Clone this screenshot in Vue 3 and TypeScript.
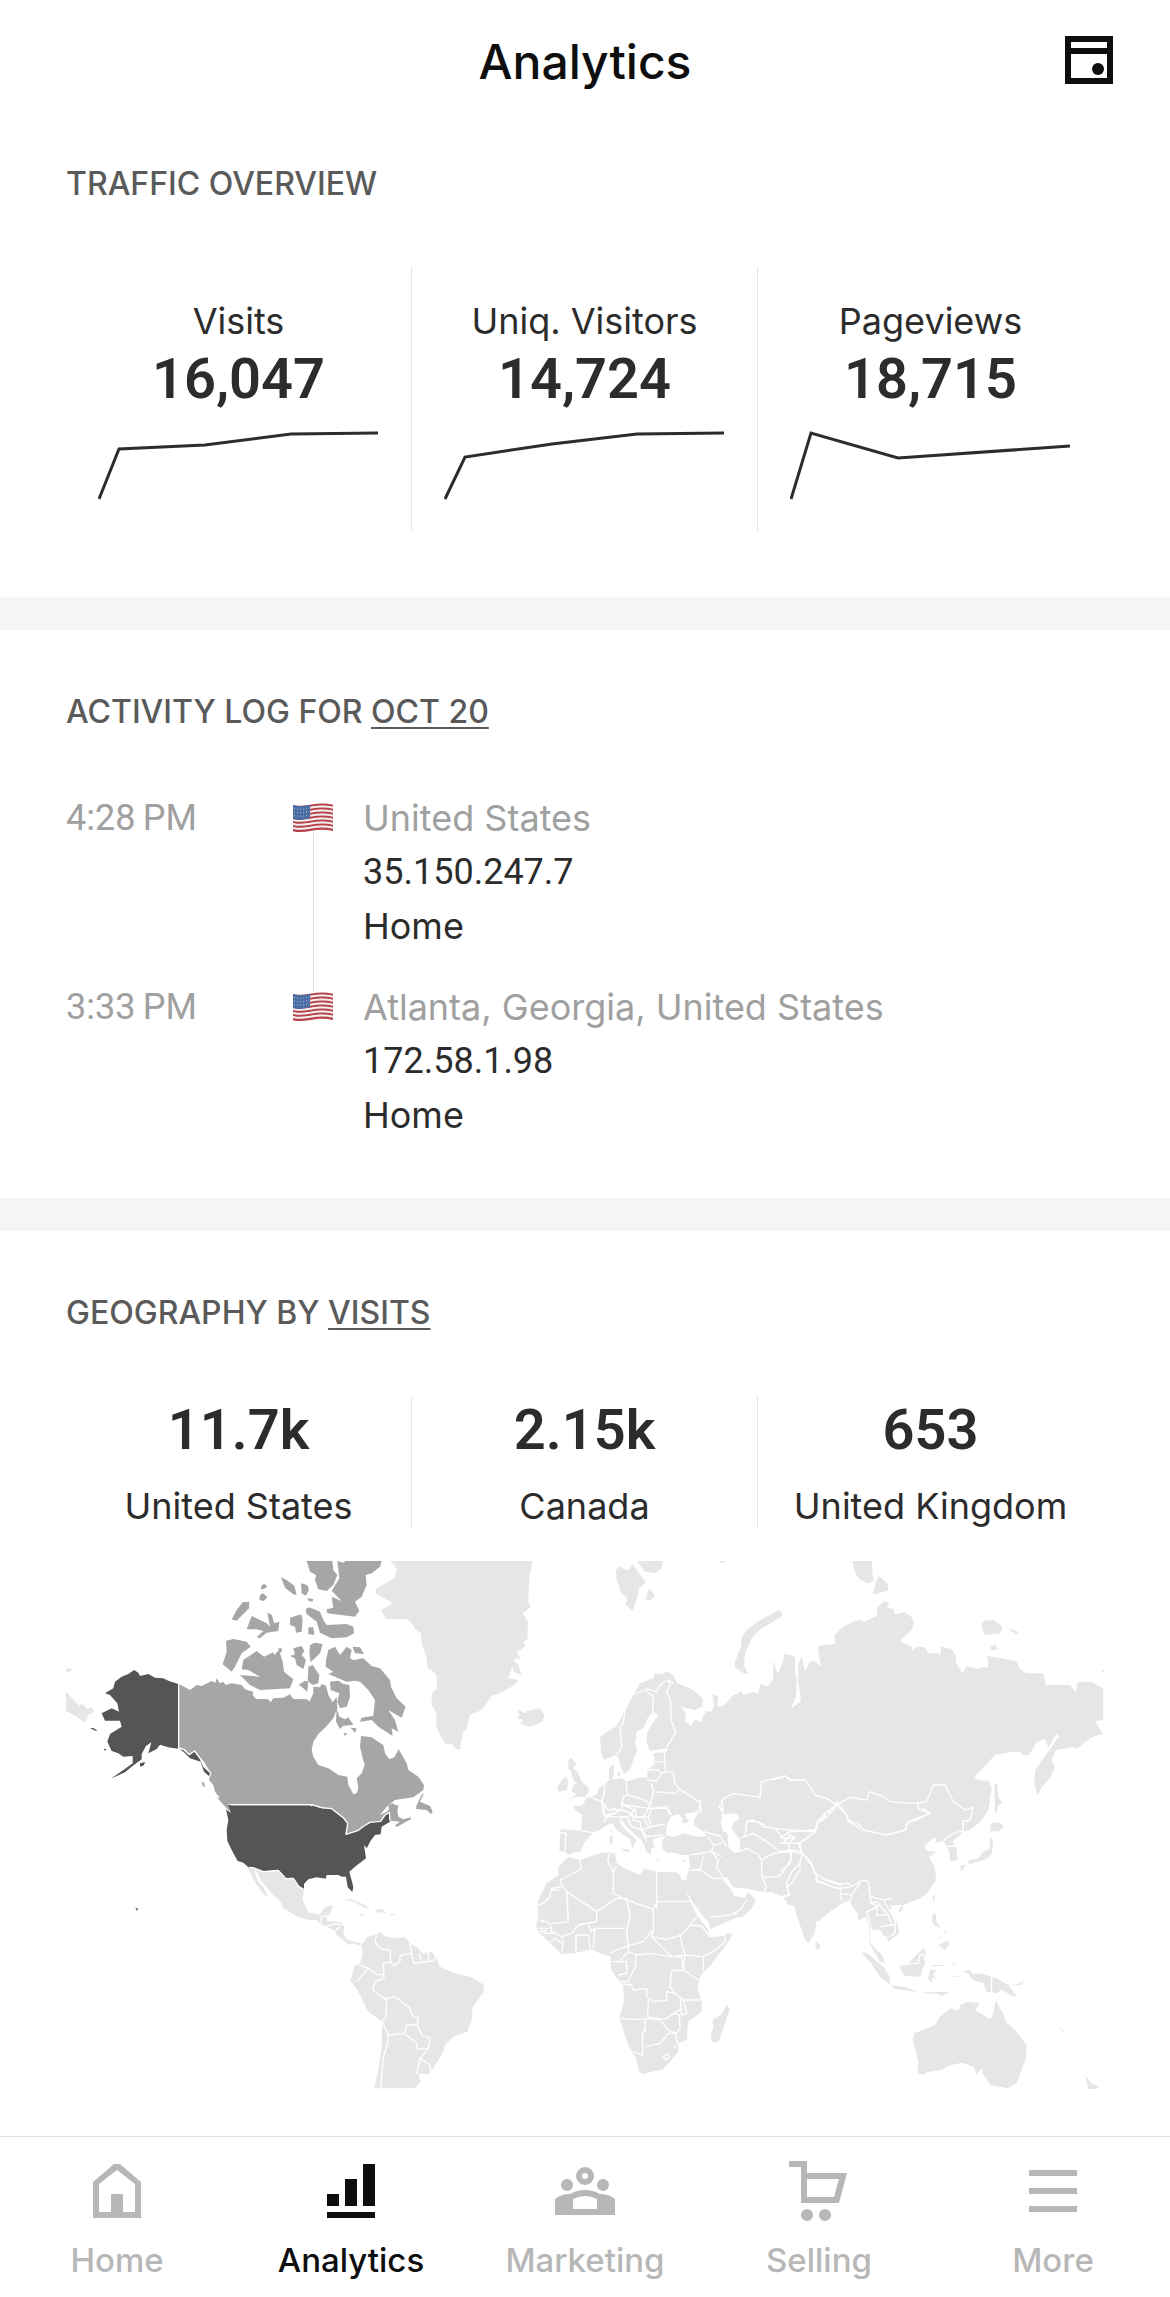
<script setup lang="ts">
interface Stat {
  label: string
  value: string
  points: string
}

interface Visit {
  time: string
  place: string
  ip: string
  page: string
}

interface CountryStat {
  name: string
  value: string
}

interface Tab {
  name: string
  icon: string
  active?: boolean
}

/* One tile of the world map: its origin and what is drawn in it. */
interface MapTile {
  id: string
  x: number
  y: number
  land: string
  mid?: string
  dark?: string
  water?: string
  borders?: string
}

const stats: Stat[] = [
  { label: 'Visits', value: '16,047', points: '1,69 21,19 107,15 193,4 280,3' },
  { label: 'Uniq. Visitors', value: '14,724', points: '1,69 21,27 108,14 193,4 280,3' },
  { label: 'Pageviews', value: '18,715', points: '1,69 21,3 108,28 280,16' },
]

const visits: Visit[] = [
  { time: '4:28\u2009PM', place: 'United States', ip: '35.150.247.7', page: 'Home' },
  { time: '3:33\u2009PM', place: 'Atlanta, Georgia, United States', ip: '172.58.1.98', page: 'Home' },
]

const countries: CountryStat[] = [
  { name: 'United States', value: '11.7k' },
  { name: 'Canada', value: '2.15k' },
  { name: 'United Kingdom', value: '653' },
]

const tabs: Tab[] = [
  {
    name: 'Home',
    icon: 'M5 22L26 4H32L53 22V58H5ZM11 24V52H23V34H35V52H47V24L29 10Z',
  },
  {
    name: 'Analytics',
    icon: 'M5 34H17V46H5ZM23 19H35V46H23ZM41 4H53V46H41ZM5 52H53V58H5Z',
    active: true,
  },
  {
    name: 'Marketing',
    icon:
      'M29 7a9 9 0 1 1 0 18a9 9 0 1 1 0-18ZM29 13a3 3 0 1 0 0 6a3 3 0 1 0 0-6Z' +
      'M11 19a6 6 0 1 1 0 12a6 6 0 1 1 0-12ZM47 19a6 6 0 1 1 0 12a6 6 0 1 1 0-12Z' +
      'M-1 39Q5 34 14 34Q21 30 29 30Q37 30 44 34Q53 34 59 39V55H-1ZM17 39V49H41V39Q35 36 29 36Q23 36 17 39Z',
  },
  {
    name: 'Selling',
    icon:
      'M-1 1H17V13H57L49 43H11V7H-1ZM17 19V37H44L49 19Z' +
      'M17 49a6 6 0 1 1 0 12a6 6 0 1 1 0-12ZM35 49a6 6 0 1 1 0 12a6 6 0 1 1 0-12Z',
  },
  { name: 'More', icon: 'M5 10H53V16H5ZM5 28H53V34H5ZM5 46H53V52H5Z' },
]

const flagStripes = Array.from({ length: 13 }, (_, i) => ({
  y: 3 + i * 2,
  color: i % 2 === 0 ? '#b8404a' : '#f3eeee',
}))

const tiles: MapTile[] = [
  {
    id: 'north-america',
    x: -18,
    y: -33,
    land:
      'M990 33H1200V597L1190 597L1175 582L1155 580L1138 550L1128 520L1130 490L1115 465L1115 430L1130 415L1135 385L1115 360L1103 355L1100 325L1085 280L1083 250L1068 240L1050 213L1040 207L980 208L962 180L1000 160L945 130L950 115L1005 85L1010 55Z' +
      'M18 425L58 467L65 460L82 478L95 472L103 485L85 495L75 518L50 500L18 483ZM18 357L30 355L36 361L18 368Z',
    mid:
      /* mainland */
      'M357 402L390 420L410 405L425 408L455 393L466 398L470 385L480 400L490 395L497 405L515 400L545 405L555 418L580 425L578 435L588 447L625 448L632 457L640 445L670 443L690 433L700 447L742 448L748 455L760 430L760 410L780 412L785 402L798 407L805 435L818 457L830 440L832 475L820 505L798 530L775 552L760 575L755 600L760 620L775 645L805 655L835 675L862 680L865 705L880 733L890 730L895 715L890 685L905 670L914 645L908 625L900 590L903 558L935 562L950 572L970 585L975 610L988 628L1003 622L1016 598L1040 640L1045 660L1075 680L1092 705L1090 720L1060 742L1005 750L980 770L960 795L980 785L995 768L1015 765L1012 785L1015 800L1030 808L1050 803L1052 808L1030 818L1012 830L1005 828L1020 815L993 812L960 820L925 822L893 840L862 855L858 845L863 822L850 805L815 778L785 775L757 765H512L480 745L465 725L460 705L447 690L452 668L432 635L405 605L390 615L375 598L357 593Z' +
      'M470 742L495 750L515 775L515 787L500 775ZM425 697L432 697L435 712L428 708Z' +
      'M1085 735L1092 730L1080 755L1110 768L1118 785L1113 792L1100 780L1068 777L1070 765Z' +
      /* arctic islands */
      'M740 33H817L820 60L832 75L820 105L800 123L775 118L765 90L768 75L750 65Z' +
      'M832 33L850 38L857 33H965L960 50L935 70L917 75L920 105L905 140L885 155L898 182L885 200L802 190L800 178L820 173L815 140L845 153L815 122L838 85Z' +
      'M737 178L748 172L780 185L790 210L800 225L860 222L880 230L882 250L860 262L815 265L780 248L770 215L740 192Z' +
      'M663 82L680 90L703 107L710 135L700 133L675 113ZM723 100L742 105L747 120L737 137L725 130ZM742 145L760 147L757 155L745 152Z' +
      'M605 105L615 102L622 110L610 118L603 116ZM600 135L610 130L622 142L612 153L598 150Z' +
      'M548 157L568 155L567 175L530 212L515 208L530 180ZM560 238L575 198L620 220L630 230L622 187L635 195L643 220L658 215L655 243L620 248L600 265L590 262L610 243L590 238Z' +
      'M690 203L723 193L728 208L725 245L708 248L705 230L690 225ZM745 232L760 232L763 255L745 252Z' +
      'M498 272L520 267L560 275L572 290L545 310L525 350L515 365L488 343L500 305Z' +
      'M590 303L612 320L640 307L643 315L657 300L668 335L672 365L700 388L690 415L600 420L570 405L540 375L600 380L565 360L545 358L550 330ZM655 295L665 295L665 308L657 305Z' +
      'M700 295L725 288L733 303L725 315L738 330L730 357L710 345L705 325L690 318L705 313ZM750 285L765 278L788 282L780 310L752 337L748 310Z' +
      'M745 350L758 345L778 375L775 400L757 405L743 392ZM715 405L735 392L745 395L742 425L722 408Z' +
      'M805 300L825 290L840 315L860 290L875 300L870 325L880 330L910 325L935 348L960 355L990 390L993 410L1010 445L1037 470L1025 503L985 480L1005 510L1015 545L995 535L998 558L955 530L935 510L900 515L905 503L940 497L945 450L925 420L900 395L885 392L860 395L805 372L820 365L797 350L798 330ZM878 290L900 292L912 312L885 310Z' +
      'M810 395L835 392L850 402L868 405L870 440L860 470L840 475L832 455L838 430L812 420ZM830 475L838 500L855 508L865 502L880 525L850 527L840 537L828 515ZM872 533L890 535L885 548ZM850 550L862 549L855 558Z',
    dark:
      'M222 360L235 368L240 378L265 372L285 383L310 385L325 392L355 402V596L325 592L300 584L290 597L265 610L274 577L258 588L245 612L245 628L215 650L195 667L152 686L190 660L218 640L218 618L190 620L175 610L155 603L142 575L150 552L185 530L180 512L135 512L125 490L155 475L177 485L172 460L150 435L135 430L160 415L165 395L185 380L205 372Z' +
      'M355 594L372 599L388 614L404 603L420 625L432 650L452 668L449 680L432 665L422 635L390 625L372 607Z' +
      'M240 640L256 636L250 647L240 650ZM90 535L100 534L112 542L108 543ZM130 597L140 597L135 602Z',
    water: 'M905 440L918 430L925 445L915 460L905 452Z',
    borders:
      'M356 402V594L372 599L388 614L404 603L420 625L432 650L452 668L449 680M512 764H750L757 768',
  },
  {
    id: 'americas',
    x: -18,
    y: 717,
    land:
      /* mexico and central america */
      'M563 200L610 215L640 215L655 211L678 236L700 235L715 260L732 268L728 300L745 338L780 343L795 320L820 315L812 335L803 350L800 362L845 367L852 380L850 402L862 420L885 425L905 430L900 438L880 430L868 435L830 405L825 392L800 380L780 372L770 360L745 360L715 352L670 325L662 305L640 285L605 245L590 215L582 210L595 245L610 260L625 295L605 275L590 255L572 222Z' +
      'M850 300L870 297L900 308L930 323L915 325L880 305ZM945 328L965 328L980 338L950 337ZM900 343H912L912 346H900ZM990 342H1005V345H990Z' +
      /* south america */
      'M905 435L920 412L945 405L960 395L975 408L1000 415L1035 412L1050 430L1075 445L1085 460L1115 455L1130 475L1140 500L1185 520L1230 530L1270 553L1272 575L1238 620L1235 660L1222 695L1180 710L1155 735L1150 755L1120 805L1105 823L1075 822L1082 845L1065 865H942L955 810L965 740L967 665L925 635L895 575L872 543L882 500L900 490L908 465Z',
    mid:
      'M1006 74L1030 60L1052 52L1053 57L1015 78ZM985 15L1000 10L1010 20L1012 40L1015 55L1003 60L993 60Z',
    dark:
      'M505 15H755L785 25L815 27L850 55L863 72L858 103L893 92L915 75L930 67L962 64L975 45L988 37L990 65L965 80L962 103L945 105L932 122L920 145L912 135L918 175L885 200L868 215L880 260L877 276L863 262L858 230L845 230L835 225L800 225L797 236L770 232L745 238L732 252L732 269L717 260L700 235L678 236L657 212L640 211L610 215L583 204L565 202L550 188L533 183L515 150L502 122L500 90L505 60L498 28L512 38Z' +
      'M226 325L234 325L231 333Z',
    borders:
      'M512 14H755L785 23L815 26L850 53L863 70L858 103L893 92L912 78L930 67L962 64L975 45L988 37L990 62' +
      'M567 202L583 204L610 215L655 211L678 236L700 235L717 260L732 269' +
      'M780 372L785 350L805 348M800 380L820 372L848 373M825 392L840 380' +
      'M950 405L945 425L960 445L990 450L992 485L970 490L972 535L945 545L938 570L965 590L980 600L978 650L967 665L985 705L1030 700M992 485L1000 497L1020 485L1020 467L1055 460L1050 430M1055 460L1062 490L1120 482L1132 468M1078 460L1085 487M1105 455V483' +
      'M890 492L925 505L950 523L972 525M925 505L890 545M970 598L1005 590L1050 625L1055 645L1075 655L1072 675L1040 675L1033 700L1070 730L1072 748L1105 745L1110 715L1085 705L1072 675M1105 745L1080 775L1110 795L1112 815M1080 775L1070 822M967 665L985 705L982 735L970 770L962 865',
  },
  {
    id: 'europe',
    x: 1122,
    y: -33,
    land:
      /* greenland east and islands */
      'M-10 33H278L268 80L265 155L272 172L248 190L264 215L262 268L250 275L257 290L230 305L242 328L225 325L205 385L237 390L215 410L180 430L155 438L125 480L90 495L78 540L68 550L60 597L45 595L38 582L15 580L-10 535ZM222 333L235 345L245 375L225 370L217 350Z' +
      'M230 478L255 490L262 482L300 475L313 495L308 515L270 530L240 522L250 510L230 503L240 495Z' +
      'M528 60L542 47L555 60L568 58L578 43L617 97L597 115L592 145L577 183L557 165L562 145L545 130L530 90ZM590 33H668L665 55L645 70L615 65ZM625 117L635 122L645 138L630 152L618 147ZM840 33H855L852 39H843Z' +
      'M1018 180L1028 190L1022 202L965 235L935 265L915 310L912 345L925 373L910 370L885 352L885 335L903 290L905 260L920 240L960 210Z' +
      /* british isles */
      'M385 630L395 623L402 635L410 640L400 655L415 668L425 695L445 712L447 725L435 740L405 742L388 748L410 732L395 725L400 705L412 700L400 690L393 665L385 655ZM365 690L378 680L385 690L380 720L355 725L352 712Z' +
      /* scandinavia, russia and central europe */
      'M480 560L530 528L560 470L600 400L640 385L645 370L670 372L680 363L700 375L712 400L760 420L788 445L788 468L765 480L722 470L737 490L736 515L755 528L762 508L785 518L788 497L800 483L815 485L822 465L817 432L835 440L832 468L850 468L880 435L905 425L910 436L940 425L955 432L960 402L990 412L1030 437L1033 420L1015 375L1035 312L1065 320V400L1055 475L1080 455L1090 440V782H425L398 772L405 767L422 768L442 755L455 740L472 732L475 715L495 702L508 690L507 655L522 643L522 670L515 688L545 685L560 695L600 683L622 683L622 660L645 643L640 610L680 605L685 595L630 603L620 580L622 545L655 495L640 485L625 500L610 535L590 545L585 580L592 600L578 635L570 660L552 672L540 645L535 620L525 615L492 630L483 610ZM533 668L542 668L540 677L533 677Z',
    borders:
      'M530 615L545 590L540 530L550 520L555 480L575 435L615 420L640 440L638 485M615 415L650 425L665 400L685 390L690 405L680 425L692 455L693 510L707 548L680 592M685 390L700 400' +
      'M645 635L675 637L673 605M622 660L655 660L665 670L650 693L620 690M675 637L677 665L665 670M677 665L700 668L705 700L720 718L705 730L640 725L635 700M720 718L780 757L778 780L740 800M495 700L492 735L485 755L505 780L545 778L550 740L562 735L558 695M562 735L600 745L632 760L640 725M632 760L625 775L590 770L550 765M625 775L680 775L695 795M450 740L485 755L490 790L500 800L545 780M545 780L575 790L590 770M575 790L580 805L610 800L625 775M610 800L625 830M500 800L560 800L575 830L605 840' +
      'M838 770L850 745L880 730L960 742L965 695L1035 678L1050 690L1080 690M838 770L850 790L845 800M918 840L920 815L940 810L975 825',
    water:
      'M735 790L775 790L760 810L740 808ZM848 795L885 790L895 800L870 820L875 845H850L842 820Z',
  },
  {
    id: 'africa',
    x: 1302,
    y: 717,
    land:
      /* southern europe and the near east */
      'M262 -8H1020V310L960 360L948 365L945 395L925 430L915 418L890 345L885 315L865 312L850 290L835 275L790 277L735 265L700 262L680 232L665 235L690 265L705 287L735 290L745 275L768 302L755 325L730 350L705 355L630 388L627 370L580 310L540 240L558 235L570 200L566 165L545 165L525 158L500 158L486 145L487 120L500 107L480 112L458 118L465 140L452 147L453 165L440 155L425 120L400 100L378 78L362 55L358 65L372 85L410 120L405 128L398 145L390 118L350 90L338 70L325 73L300 90L278 98L253 128L240 155L220 158L205 165L195 155L178 153L182 88L243 92L247 45L232 35L218 20L245 18Z' +
      'M362 148L388 147L385 158ZM330 108H338V130H330ZM332 85L337 90L335 103ZM458 178H475V182ZM545 182L558 178L552 187Z' +
      /* africa */
      'M205 172L240 180L300 160L328 157L345 160L350 190L370 203L420 225L435 205L470 215L530 217L540 225L560 280L590 345L625 390L630 412L695 398L693 415L640 485L600 530L592 565L605 605L605 635L565 665L560 720L535 730L535 755L490 808L425 822L415 810L410 780L385 735L358 655L372 605L370 560L333 510L332 470L300 460L275 447L225 460L185 462L150 430L115 395L108 375L115 350L112 305L140 250L175 225L175 200Z' +
      'M682 613L688 632L655 727L635 725L632 700L640 685L637 660L665 643ZM948 425L960 435L957 447H948Z',
    water:
      'M498 97L502 70L515 48L535 42L548 55L545 67L560 70L575 50L592 38L582 60L583 77L612 95L618 108L590 110L553 100L520 110L500 107Z' +
      'M663 62L690 42L713 43L717 58L700 68L695 85L720 120L721 155L702 158L685 140L683 105ZM458 118L480 112L487 120L486 145L500 158L470 162Z',
    borders:
      /* europe and asia */
      'M243 92L278 98M182 97L198 100L195 155M300 0L315 15L310 40L320 55L310 65M315 45L345 40L355 30L335 25M362 55L395 45L410 52L405 30L380 20L360 10M410 52L445 50L455 25L500 20L510 45M445 50L455 80L495 72M455 80L425 90L420 65L395 60M425 90L440 110L490 105M425 90L440 125M600 0L605 35L575 45M665 0L670 30L655 20M735 110L740 65L775 65L790 80L825 85L850 115L870 140L860 155L840 155L800 125L760 100L720 115M820 85L870 90L945 95L920 115L895 130L850 130L870 105L885 112L870 125M895 130L905 160L870 155L875 175L850 215L835 230L785 232M870 155L820 160L785 180L775 165L740 145L718 155M785 180V230L800 262L790 275M905 165L900 190L875 215L860 250L865 285L850 287M905 160L935 195L945 220L975 240L1020 255M950 228L952 242L1010 265M612 95L660 108L680 140M625 110L640 135L665 130M640 135L635 155L570 165M635 155L655 180L650 200L670 235L640 235L600 210L570 210M600 210L610 170M640 155L665 170M545 235L560 240M630 352L690 345L720 330L740 300M705 345L715 330M700 285L735 292' +
      'M945 95L955 60L975 55L1000 30L1010 5M1010 5L1020 10' +
      /* africa */
      'M240 180L243 207L182 240L185 260L155 265L150 290L130 310L112 315M328 160L323 185L340 215L340 280L380 300L460 328L460 390L445 405L430 425L385 437L380 400L390 345L380 295M340 215L350 200M380 295L350 295L290 335L200 275L182 250M200 275L205 365L155 370M152 270H180M150 370L120 360M290 335V365L235 375L215 400L185 410L155 395L150 370M265 375L275 395L285 385L375 385M285 385L280 445M228 405H265L270 445M228 405V458M185 410L190 430L185 455M118 385H145M118 393H140M145 430L165 415L185 430M130 400L165 400M470 215V325M470 305H575M460 328L470 305M460 390L455 410L500 418L545 405L570 375L590 350M570 375L605 378L630 410L675 405V425L640 455L610 470L555 465L545 430L540 400M455 410L500 455L515 470L555 465M555 465L550 510L595 540M610 470V515M515 470L545 470L550 510L515 512L510 560L525 580L500 575V600L460 605L440 590L440 565L400 570L395 555L365 552M385 437L350 450L330 460M335 485H380V520L355 525M385 437V455L410 465L405 500L385 545L360 545M385 455L360 482M410 465L450 460L515 470M525 580L550 600H600M550 600L560 640L545 645L540 590M445 600L443 650L470 660L500 655L545 625M360 655L400 658L480 655M435 658V695H428V765L400 755M435 740L480 730L505 700L525 700L535 735M480 660L505 690L530 700L540 685L538 645L520 640M490 770L500 762L510 770L498 780ZM525 735V745',
  },
  {
    id: 'russia',
    x: 2142,
    y: -33,
    land:
      'M-20 330L-5 380L15 437L-20 425ZM0 360L15 312L40 317L38 345L50 380L48 440L30 480L45 482L63 450L55 400L55 345L65 318L75 362L90 335L105 333L122 350L113 292L125 285L167 283L163 255L190 230L225 212L245 210L250 217L290 197L293 170L315 153L328 160L320 172L340 178L345 193L375 187L395 202L402 220L395 240L360 272L395 290L398 302L410 290L435 292L445 308L482 312L483 290L515 297L528 318V340L548 370L560 348L590 357L610 350L625 353L622 318L708 333L720 357L738 370H790L797 405L870 405L888 425L893 395L935 397L970 415V510L947 513L968 552L935 562L888 597L880 590L828 600L815 630L825 650L810 685L785 712L772 735L763 700L765 662L790 625L838 558L828 552L805 593L795 568L770 577L747 615L730 616L720 605L690 607L645 615L582 683L600 690L625 693L635 715L625 780L600 815L570 840L545 844H-60V440Z' +
      'M217 33H275L280 95L262 100L235 85L222 60ZM297 77L324 103V122L278 133L288 95ZM603 225L612 212L640 210L667 230L662 250L615 255ZM682 235L715 245L710 255ZM630 292L645 285L655 298L635 301ZM963 365L971 357V368ZM-8 180L8 190L-8 203ZM643 703H652L655 740L668 760L655 765L650 790L645 780Z',
    borders:
      'M-20 690L15 678L35 690H60L78 690L105 735L140 745L170 765L210 742L262 750L268 725L310 740L330 755L400 760L440 755L460 705L495 705L520 755L555 780L580 772L570 810L550 815V840M170 765L155 775L135 790L110 820L112 840M170 765L200 795L205 815L240 835M415 755L415 775L450 790L410 805L380 820L378 840',
  },
  {
    id: 'asia-pacific',
    x: 2142,
    y: 717,
    land:
      'M-20 -8H630L625 30L600 65L570 90L550 92L535 110L518 122L530 150L532 180L510 184L508 155L498 137L490 122L465 130L470 112L455 118L433 140L442 153L470 155L447 172L455 185L465 205L468 240L440 282L420 295L368 315L335 315L330 335L350 365L358 400L325 425L322 410L308 405L300 390L280 390L270 375L270 425L285 445L305 462L315 490L300 485L285 460L268 430V385L258 350L235 362L232 340L217 320L210 300L185 312L107 360L105 395L85 430L75 418L50 345L43 318L25 315L10 290L-20 280Z' +
      'M370 313L368 330L357 340V328ZM458 290L467 280L462 303H457ZM105 425L118 432L120 445L108 447Z' +
      'M635 65L650 70L655 65L672 80L655 95L635 92L628 103ZM632 110L640 125L635 160L625 175L595 185L560 190L570 180L595 175L610 155L628 145ZM540 197L555 195L545 215ZM565 190L580 188L568 196Z' +
      'M457 343L468 342L470 365L482 385L465 378L457 368ZM478 410L485 415H478ZM495 390L500 400L492 397ZM475 435L505 422L507 435L495 450Z' +
      'M243 457L262 460L310 500L330 530L328 553L300 530L270 485ZM330 555L380 562L410 575L345 567ZM430 577L510 575L485 588L470 580L440 581ZM360 492L385 490L415 460L430 445L440 460L430 470L435 490L420 530L375 527L362 510ZM450 508L470 512L458 522L475 545L458 530L455 548L445 538ZM455 495H492V498H455ZM518 488L525 490L522 500ZM520 527H540V530H520Z' +
      'M550 513L570 510L577 522L600 520L650 535L685 555L710 590L690 585L665 568L650 580L620 575L610 550L580 540L565 522ZM690 555L715 552L732 542L725 555Z' +
      'M647 600L660 625L670 640L680 668L700 685L740 735L738 775L710 850L683 865L632 855L608 820L605 805L590 825L582 800L545 788L505 797L485 810L440 817L430 825L413 820L415 785L398 718L403 700L465 675L480 650L512 625L535 633L540 615L565 605L600 610L585 630L632 658L640 640Z' +
      'M915 825L932 848L957 860L950 867H925ZM832 677L855 695L850 695ZM950 658L957 657L955 662Z',
    borders:
      'M0 115L30 95L100 90L110 100M170 5L160 30L135 40L130 60L110 70L105 95L60 130L65 155L95 190L105 220L140 240L180 252L205 250L215 260L250 240L265 245L270 290L310 300L335 295M0 130L45 130L60 130M10 115L45 112L30 125M0 155L35 150L65 155M35 155L30 190L0 215M60 185L60 210L35 250L20 260L30 285L10 290M107 230L110 245L175 265L210 262M180 252V262M180 265L185 305M185 280L215 285L212 300M215 285L240 250M270 290L275 310L295 320L260 335L270 375M270 310L290 305L325 345L335 375L300 380M290 320V345L320 345M310 300L325 325L345 360L345 400L330 410M335 375L345 375' +
      'M170 5L200 45L205 60L240 75L250 90L320 105L375 90L385 65L410 60L450 40L430 25M550 92V60M550 92L520 100L490 122M500 140L525 138M362 495L400 490L415 490L420 465L435 462M635 525V580',
  },
]
</script>

<template>
  <div class="app">
    <header class="top-bar">
      <h1 class="title">Analytics</h1>
      <button class="calendar" type="button" aria-label="Choose dates">
        <svg viewBox="0 0 48 48" width="48" height="48" aria-hidden="true">
          <path fill-rule="evenodd" d="M0 0H48V48H0ZM6 6V12H42V6ZM6 18V42H42V18Z" />
          <circle cx="33" cy="33" r="6" />
        </svg>
      </button>
    </header>

    <main>
      <section class="panel traffic">
        <h2 class="heading">TRAFFIC OVERVIEW</h2>
        <div class="columns">
          <div v-for="s in stats" :key="s.label" class="stat">
            <span class="label">{{ s.label }}</span>
            <strong class="value">{{ s.value }}</strong>
            <svg class="spark" viewBox="0 0 281 71" aria-hidden="true">
              <polyline :points="s.points" />
            </svg>
          </div>
        </div>
      </section>

      <section class="panel activity">
        <h2 class="heading">
          ACTIVITY LOG FOR <button type="button" class="picker">OCT 20</button>
        </h2>
        <ol class="log">
          <li v-for="v in visits" :key="v.time" class="entry">
            <time class="time">{{ v.time }}</time>
            <div class="rail">
              <svg class="flag" viewBox="0 0 40 30" role="img" aria-label="United States">
                <path
                  v-for="s in flagStripes"
                  :key="s.y"
                  :d="`M0 ${s.y}C14 ${s.y + 4} 22 ${s.y - 5} 40 ${s.y}`"
                  :stroke="s.color"
                  stroke-width="2.2"
                  fill="none"
                />
                <path d="M0 2C7 4 12 3 17 1.500V15C12 16.500 7 18 0 16Z" fill="#4a6da3" />
                <path
                  d="M1 5.500C7 7 12 6 16 4.500M1 9C7 10.500 12 9.500 16 8M1 12.500C7 14 12 13 16 11.500"
                  stroke="#a9bbd6"
                  stroke-width="1"
                  stroke-dasharray="1 2"
                  fill="none"
                />
              </svg>
            </div>
            <div class="details">
              <span class="place">{{ v.place }}</span>
              <span class="address">{{ v.ip }}</span>
              <span>{{ v.page }}</span>
            </div>
          </li>
        </ol>
      </section>

      <section class="panel geography">
        <h2 class="heading">
          GEOGRAPHY BY <button type="button" class="picker">VISITS</button>
        </h2>
        <div class="columns">
          <div v-for="c in countries" :key="c.name" class="country">
            <strong class="value">{{ c.value }}</strong>
            <span class="label">{{ c.name }}</span>
          </div>
        </div>
        <svg class="map" viewBox="0 0 3114 1584" role="img" aria-label="Visits by country">
          <g v-for="t in tiles" :key="t.id" :transform="`translate(${t.x} ${t.y})`">
            <path class="land" :d="t.land" />
            <path v-if="t.mid" class="mid" :d="t.mid" />
            <path v-if="t.dark" class="dark" :d="t.dark" />
          </g>
          <g v-for="t in tiles" :key="t.id" :transform="`translate(${t.x} ${t.y})`">
            <path v-if="t.water" class="water" :d="t.water" />
            <path class="border" :d="t.borders" />
          </g>
        </svg>
      </section>
    </main>

    <nav class="tabs" aria-label="Main">
      <a
        v-for="t in tabs"
        :key="t.name"
        href="#"
        class="tab"
        :class="{ active: t.active }"
        :aria-current="t.active ? 'page' : undefined"
      >
        <svg viewBox="0 0 58 62" width="58" height="62" aria-hidden="true">
          <path fill-rule="evenodd" :d="t.icon" />
        </svg>
        <span>{{ t.name }}</span>
      </a>
    </nav>
  </div>
</template>

<style>
body {
  margin: 0;
  background: #fff;
}
</style>

<style scoped>
.app {
  font-family: Inter, "Liberation Sans", sans-serif;
  font-size: 36px;
  color: #2c2c2c;
}

button {
  padding: 0;
  border: 0;
  background: none;
  font: inherit;
  color: inherit;
  cursor: pointer;
}

.top-bar {
  display: grid;
  grid-template-columns: 1fr auto 1fr;
  align-items: start;
  height: 88px;
  padding: 32px 57px 0;
  color: #0e0e0e;
}

.title {
  grid-column: 2;
  margin: 0;
  font-size: 48px;
  font-weight: 500;
  line-height: 60px;
}

.calendar {
  justify-self: end;
  height: 48px;
  margin-top: 4px;
}

.calendar svg {
  display: block;
  fill: #0e0e0e;
}

.panel {
  padding: 62px 66px 0;
  border-top: 33px solid #f5f5f5;
}

.traffic {
  padding-top: 44px;
  padding-bottom: 66px;
  border-top: 0;
}

.activity {
  padding-bottom: 56px;
}

.geography {
  padding-bottom: 47px;
}

.heading {
  margin: 0;
  font-size: 32px;
  font-weight: 500;
  line-height: 40px;
  color: #5a5a5a;
}

.picker {
  text-decoration: underline;
  text-decoration-thickness: 2px;
  text-underline-offset: 4px;
}

.columns {
  display: grid;
  grid-template-columns: repeat(3, 1fr);
  margin-top: 63px;
}

.stat,
.country {
  display: flex;
  flex-direction: column;
  align-items: center;
  border-right: 1px solid #e6e6e6;
}

.stat:last-child,
.country:last-child {
  border-right-color: transparent;
}

.stat {
  padding: 30px 32px;
}

.country {
  gap: 16px;
}

.label {
  line-height: 48px;
  white-space: nowrap;
}

.country .label {
  margin: 2px 0 -2px;
}

.value {
  font-family: Roboto, "Liberation Sans", sans-serif;
  font-size: 56px;
  font-weight: 600;
  line-height: 68px;
}

.spark {
  display: block;
  width: 100%;
  margin-top: 17px;
}

.spark polyline {
  fill: none;
  stroke: #2c2c2c;
  stroke-width: 3;
}

.log {
  margin: 59px 0 0;
  padding: 0;
  list-style: none;
}

.entry {
  display: grid;
  grid-template-columns: 227px 70px 1fr;
  line-height: 54px;
}

.time,
.place {
  color: #a0a0a0;
}

.time,
.address {
  font-family: Roboto, "Liberation Sans", sans-serif;
}

.rail {
  display: flex;
  flex-direction: column;
  width: 40px;
}

.flag {
  flex: none;
  display: block;
  width: 40px;
  height: 30px;
  margin-top: 12px;
}

.entry:not(:last-child) .rail::after {
  content: "";
  flex: 1;
  width: 1px;
  margin: 0 auto -12px;
  background: #e0e0e0;
}

.details {
  display: flex;
  flex-direction: column;
}

.entry:not(:last-child) .details {
  padding-bottom: 27px;
}

.map {
  display: block;
  width: 100%;
  margin-top: 33px;
}

.land {
  fill: #e6e6e6;
}

.mid {
  fill: #a6a6a6;
}

.dark {
  fill: #555;
}

.water {
  fill: #fff;
}

.border {
  fill: none;
  stroke: #fff;
  stroke-width: 4;
  stroke-linejoin: round;
}

.tabs {
  display: grid;
  grid-template-columns: repeat(5, 1fr);
  padding: 23px 0 17px;
  border-top: 1px solid #dedede;
}

.tab {
  display: flex;
  flex-direction: column;
  align-items: center;
  gap: 18px;
  font-size: 33px;
  font-weight: 500;
  line-height: 40px;
  color: #b7b7b7;
  text-decoration: none;
}

.tab svg {
  display: block;
  overflow: visible;
  fill: currentColor;
}

.tab.active {
  color: #0e0e0e;
}
</style>
